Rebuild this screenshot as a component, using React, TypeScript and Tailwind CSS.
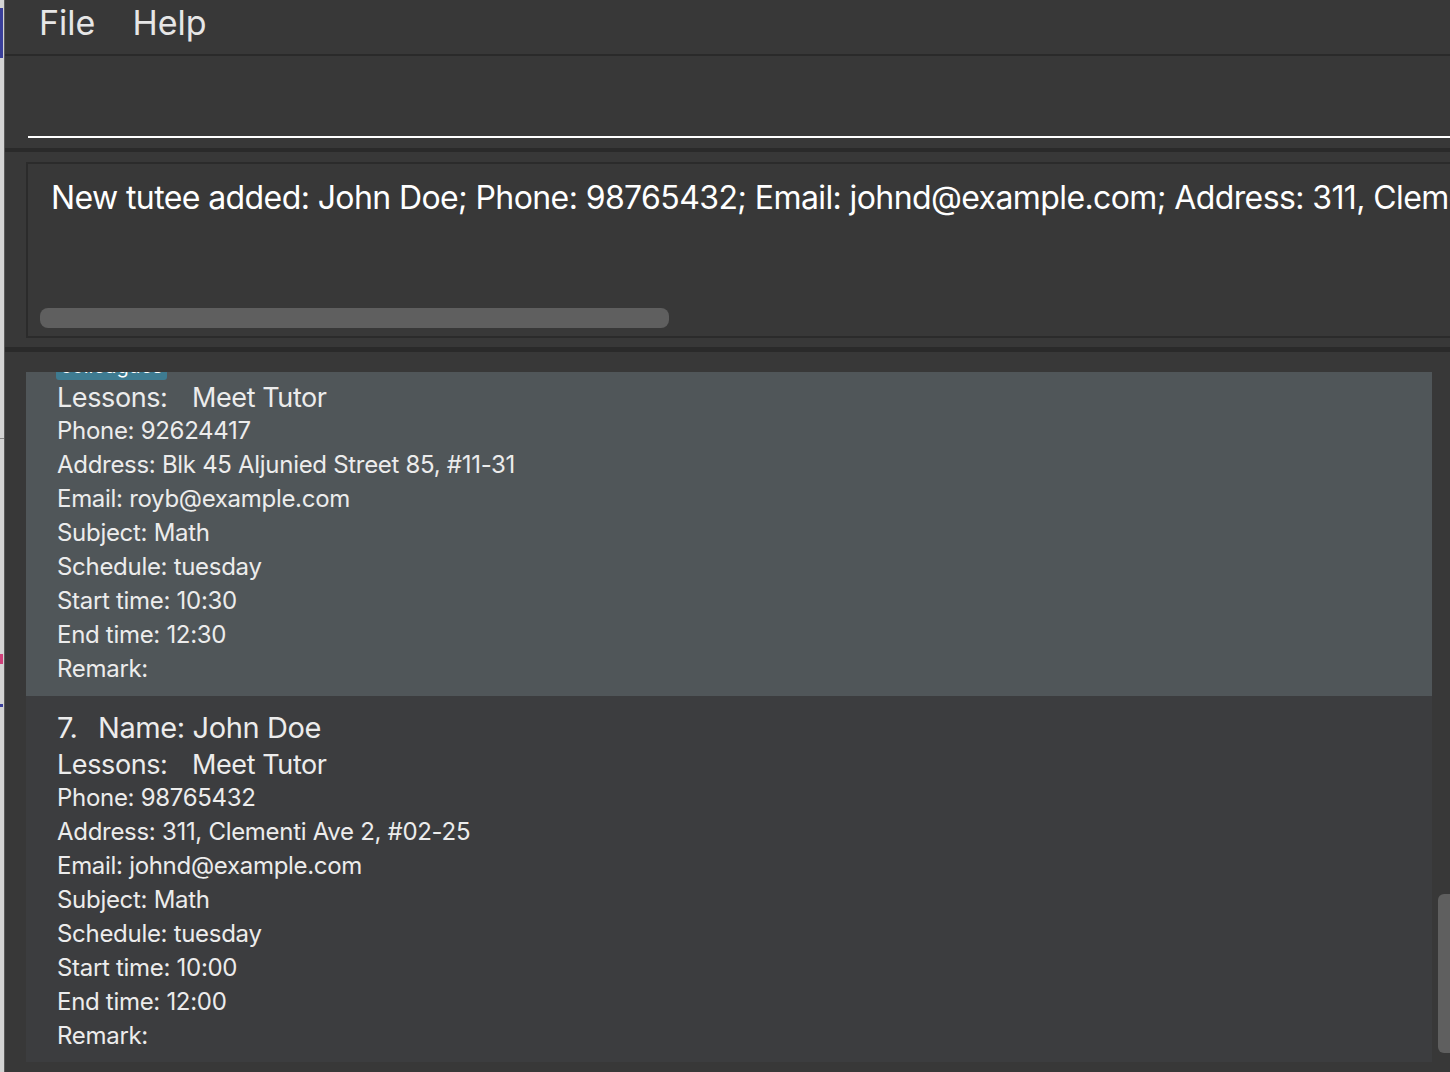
import React from "react";

type Tutee = {
  index?: number;
  name: string;
  phone: string;
  address: string;
  email: string;
  subject: string;
  schedule: string;
  start: string;
  end: string;
  tag?: string;
};

const tutees: Tutee[] = [
  {
    index: 6,
    name: "Roy Balakrishnan",
    phone: "92624417",
    address: "Blk 45 Aljunied Street 85, #11-31",
    email: "royb@example.com",
    subject: "Math",
    schedule: "tuesday",
    start: "10:30",
    end: "12:30",
    tag: "colleagues",
  },
  {
    index: 7,
    name: "John Doe",
    phone: "98765432",
    address: "311, Clementi Ave 2, #02-25",
    email: "johnd@example.com",
    subject: "Math",
    schedule: "tuesday",
    start: "10:00",
    end: "12:00",
  },
];

function TuteeCard({ t, selected, offset }: { t: Tutee; selected?: boolean; offset?: string }) {
  return (
    <div className={`${selected ? "bg-[#505659]" : "bg-[#3c3d3f]"} pl-[31px] pt-[11px] pb-[10px] text-[#ececec] ${offset ?? ""}`}>
      <div className="flex h-[42px] items-center text-[29px] tracking-[-0.4px]">
        <span className="w-[41px]">{t.index}.</span>
        <span>Name: {t.name}</span>
      </div>
      {t.tag && (
        <div className="mt-[4px] mb-[2px] flex">
          <span className="ml-[-1px] flex h-[28px] w-[111px] items-center justify-center rounded-[3px] bg-[#3e7b91] text-[20px] text-white">
            {t.tag}
          </span>
        </div>
      )}
      <div className="flex h-[32px] items-center text-[27px] tracking-[-0.4px]">
        <span className="w-[135px]">Lessons:</span>
        <span>Meet Tutor</span>
      </div>
      <div className="text-[24px] leading-[34px] tracking-[-0.3px]">
        <div>Phone: {t.phone}</div>
        <div>Address: {t.address}</div>
        <div>Email: {t.email}</div>
        <div>Subject: {t.subject}</div>
        <div>Schedule: {t.schedule}</div>
        <div>Start time: {t.start}</div>
        <div>End time: {t.end}</div>
        <div>Remark:</div>
      </div>
    </div>
  );
}

export default function App() {
  return (
    <div
      className="flex h-[1072px] w-[1450px] overflow-hidden bg-[#383838]"
      style={{ fontFamily: "Inter, 'Noto Sans', sans-serif" }}
    >
      {/* window behind, peeking out on the left */}
      <div className="flex w-[5px] shrink-0 flex-col border-r border-[#5a5a5a] bg-[#d4d4d4]">
        <div className="h-[8px]" />
        <div className="h-[50px] w-[3px] bg-[#3a3f9a]" />
        <div className="h-[380px]" />
        <div className="h-[1px] bg-[#8a8a8a]" />
        <div className="h-[215px]" />
        <div className="h-[10px] w-[3px] bg-[#d0407a]" />
        <div className="h-[40px]" />
        <div className="h-[3px] w-[3px] bg-[#3a3f9a]" />
      </div>

      <div className="flex min-w-0 flex-1 flex-col">
        {/* menu bar */}
        <div className="flex h-[56px] shrink-0 items-center gap-[37px] border-b-2 border-[#2a2a2a] pb-[9px] pl-[34px] text-[34px] text-[#e6e6e6]">
          <span>File</span>
          <span>Help</span>
        </div>

        {/* command box */}
        <div className="h-[92px] shrink-0 pl-[23px]">
          <div className="h-[82px] border-b-2 border-white" />
        </div>
        <div className="h-[4px] shrink-0 bg-[#2a2a2a]" />

        {/* result display */}
        <div className="h-[195px] shrink-0 pl-[21px] pt-[10px]">
          <div className="flex h-[176px] flex-col justify-between border-2 border-r-0 border-[#2b2b2b] bg-[#383838]">
            <div className="overflow-hidden whitespace-nowrap pl-[23px] pt-[10px] text-[32px] tracking-[-0.6px] text-white">
              New tutee added: John Doe; Phone: 98765432; Email: johnd@example.com; Address: 311, Clementi Ave 2, #02-25; Subject: Math
            </div>
            <div className="mb-[8px] ml-[12px] h-[20px] w-[629px] rounded-[8px] bg-[#5f5f5f]" />
          </div>
        </div>
        <div className="h-[5px] shrink-0 bg-[#2a2a2a]" />

        {/* tutee list */}
        <div className="flex min-h-0 flex-1 pt-[20px] pl-[21px]">
          <div className="h-[690px] w-[1406px] shrink-0 overflow-hidden">
            <TuteeCard t={tutees[0]} selected offset="mt-[-77px]" />
            <TuteeCard t={tutees[1]} />
          </div>
          <div className="ml-[6px] mt-[522px] h-[159px] w-[14px] rounded-l-[6px] bg-[#5f5f5f]" />
        </div>
      </div>
    </div>
  );
}
